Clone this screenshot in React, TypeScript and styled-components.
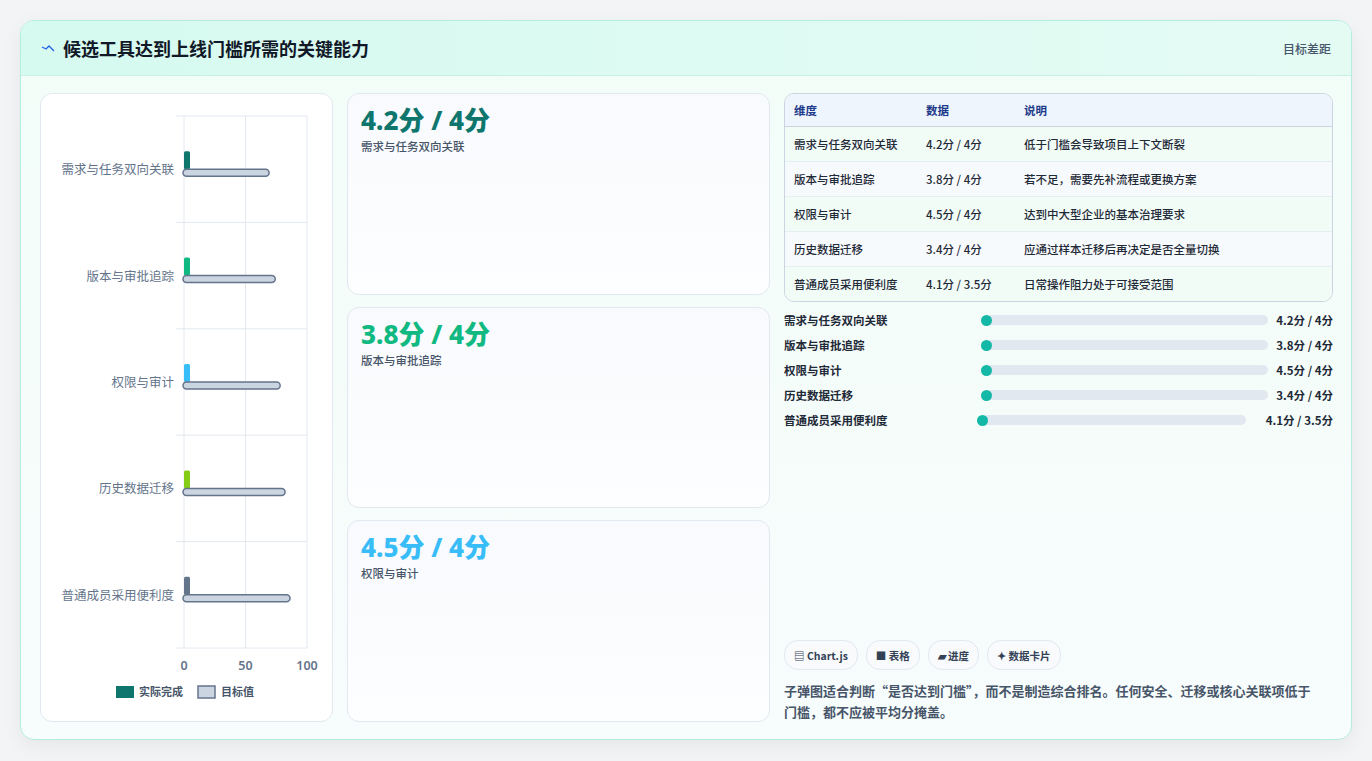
import React from "react";
import styled, { createGlobalStyle } from "styled-components";

const G = createGlobalStyle`
  html,body{margin:0;padding:0;background:#f3f4f6;}
  body{font-family:"Noto Sans CJK SC","Noto Sans",sans-serif;color:#1f2937;}
`;
const Page = styled.div`padding:20px 20px 21px 20px;height:761px;box-sizing:border-box;`;
const Card = styled.div`
  height:720px;box-sizing:border-box;border:1px solid #b5ece0;border-radius:14px;overflow:hidden;
  background:linear-gradient(180deg,#f2fdf8,#f7fcfc);box-shadow:0 6px 20px rgba(0,0,0,.06);
  display:flex;flex-direction:column;
`;
const Header = styled.div`
  height:55px;flex:none;box-sizing:border-box;display:flex;align-items:center;justify-content:space-between;
  padding:0 20px;background:linear-gradient(90deg,#d6faf0,#e4fbf4);border-bottom:1px solid #c9f0e6;
`;
const Title = styled.h1`margin:0;font-size:18px;font-weight:700;color:#111827;display:flex;align-items:center;gap:8px;`;
const Tag = styled.span`font-size:12px;color:#475569;font-weight:500;`;
const Body = styled.div`flex:1;display:grid;grid-template-columns:293px 423px 1fr;gap:14px;padding:17px 18px 18px 19px;min-height:0;`;
const Panel = styled.div`background:#fff;border:1px solid #e2e8f0;border-radius:12px;`;
const ChartPanel = styled(Panel)`position:relative;`;
const Cards = styled.div`display:grid;grid-template-rows:1fr 1fr 1fr;gap:12px;`;
const StatCard = styled(Panel)`background:linear-gradient(180deg,#f8fafd,#fdfeff);padding:10px 13px;`;
const Big = styled.div<{c:string}>`font-size:26px;font-weight:800;color:${p=>p.c};line-height:32px;font-family:"Noto Sans","Noto Sans CJK SC",sans-serif;`;
const Small = styled.div`font-size:11.5px;color:#475569;margin-top:2px;font-weight:500;`;
const Right = styled.div`display:flex;flex-direction:column;`;
const Table = styled.table`width:100%;border-collapse:separate;border-spacing:0;border:1px solid #cbd5e1;border-radius:10px;overflow:hidden;font-size:11.5px;`;
const Th = styled.th`text-align:left;font-weight:700;color:#1e3a8a;background:#eef5fd;height:32px;padding:0 9px;border-bottom:1px solid #cbd5e1;`;
const Td = styled.td<{alt?:boolean}>`height:34px;padding:0 9px;color:#1f2937;font-weight:500;border-top:1px solid #e5eef0;background:${p=>p.alt?"#f7fafc":"#f1fcf7"};`;
const Tr = styled.tr`&:nth-child(1) td{border-top:none;}`;
const Bars = styled.div`display:flex;flex-direction:column;gap:7px;margin-top:9px;`;
const BarRow = styled.div`display:grid;grid-template-columns:202px 1fr auto;align-items:center;height:18px;font-size:11.5px;color:#1f2937;font-weight:600;`;
const Track = styled.div<{w:string}>`height:10px;background:#e2e8f0;border-radius:5px;position:relative;width:${p=>p.w};`;
const Dot = styled.span`position:absolute;left:-5px;top:-0.5px;width:11px;height:11px;border-radius:50%;background:#14b8a6;`;
const Val = styled.span`font-weight:700;padding-left:8px;`;
const Spacer = styled.div`flex:1;`;
const Pills = styled.div`display:flex;gap:8px;`;
const Pill = styled.span`display:inline-flex;align-items:center;gap:3px;height:28px;padding:0 9px;border:1px solid #e2e8f0;border-radius:14px;background:#f8fafc;font-size:10.5px;font-weight:700;color:#334155;`;
const Note = styled.p`margin:10px 0 0;font-size:13px;line-height:21px;color:#475569;font-weight:600;padding-right:12px;`;

const rows = [
  ["需求与任务双向关联","4.2分 / 4分","低于门槛会导致项目上下文断裂"],
  ["版本与审批追踪","3.8分 / 4分","若不足，需要先补流程或更换方案"],
  ["权限与审计","4.5分 / 4分","达到中大型企业的基本治理要求"],
  ["历史数据迁移","3.4分 / 4分","应通过样本迁移后再决定是否全量切换"],
  ["普通成员采用便利度","4.1分 / 3.5分","日常操作阻力处于可接受范围"],
];
const colors=["#0f766e","#10b981","#38bdf8","#84cc16","#64748b"];
const targets=[70,75,79,83,87];

function Chart(){
  const x0=143, scale=1.23, top=22, h=106.4;
  return (
    <svg width="293" height="627" style={{display:"block"}}>
      {[0,50,100].map(v=><line key={v} x1={x0+v*scale} x2={x0+v*scale} y1={top} y2={554} stroke="#e2e8f0"/>)}
      {[0,1,2,3,4,5].map(i=><line key={i} x1={x0-8} x2={x0+123} y1={top+i*h} y2={top+i*h} stroke="#e2e8f0"/>)}
      {rows.map((r,i)=>{const cy=top+h*i+h/2;return <g key={i}>
        <text x={x0-10} y={cy+5} textAnchor="end" fontSize="12.5" fill="#64748b" fontFamily="Noto Sans CJK SC">{r[0]}</text>
        <rect x={x0} y={cy-18} width={6} height={18} rx={1.5} fill={colors[i]}/>
        <rect x={x0-1} y={cy} width={targets[i]*scale} height={7} rx={3.5} fill="#cbd5e1" stroke="#64748b" strokeWidth="1.5"/>
      </g>})}
      {[0,50,100].map(v=><text key={v} x={x0+v*scale} y={576} textAnchor="middle" fontSize="12.5" fill="#64748b" fontWeight="600" fontFamily="Noto Sans">{v}</text>)}
      <rect x={75} y={592} width={18} height={12} fill="#0f766e"/>
      <text x={98} y={602} fontSize="11" fill="#475569" fontWeight="700" fontFamily="Noto Sans CJK SC">实际完成</text>
      <rect x={157} y={592} width={17} height={12} fill="#cbd5e1" stroke="#64748b" strokeWidth="1.5"/>
      <text x={180} y={602} fontSize="11" fill="#475569" fontWeight="700" fontFamily="Noto Sans CJK SC">目标值</text>
    </svg>
  );
}

export default function App(){
  return <><G/><Page><Card>
    <Header><Title><svg width="14" height="10" viewBox="0 0 14 10"><path d="M1 4 L5 6 L8 3 L13 8" stroke="#2563eb" strokeWidth="1.3" fill="none"/></svg>候选工具达到上线门槛所需的关键能力</Title><Tag>目标差距</Tag></Header>
    <Body>
      <ChartPanel><Chart/></ChartPanel>
      <Cards>
        <StatCard><Big c="#0f766e">4.2分 / 4分</Big><Small>需求与任务双向关联</Small></StatCard>
        <StatCard><Big c="#10b981">3.8分 / 4分</Big><Small>版本与审批追踪</Small></StatCard>
        <StatCard><Big c="#38bdf8">4.5分 / 4分</Big><Small>权限与审计</Small></StatCard>
      </Cards>
      <Right>
        <Table><thead><tr><Th style={{width:114}}>维度</Th><Th style={{width:80}}>数据</Th><Th>说明</Th></tr></thead>
          <tbody>{rows.map((r,i)=><Tr key={i}><Td alt={i%2===1}>{r[0]}</Td><Td alt={i%2===1}>{r[1]}</Td><Td alt={i%2===1}>{r[2]}</Td></Tr>)}</tbody></Table>
        <Bars>{rows.map((r,i)=><BarRow key={i}><span>{r[0]}</span><Track w={i===4?"97%":"100%"} style={i===4?{marginLeft:-4}:undefined}><Dot/></Track><Val>{r[1]}</Val></BarRow>)}</Bars>
        <Spacer/>
        <Pills><Pill>▤ Chart.js</Pill><Pill>■ 表格</Pill><Pill>▰ 进度</Pill><Pill>✦ 数据卡片</Pill></Pills>
        <Note>子弹图适合判断“是否达到门槛”，而不是制造综合排名。任何安全、迁移或核心关联项低于门槛，都不应被平均分掩盖。</Note>
      </Right>
    </Body>
  </Card></Page></>;
}
